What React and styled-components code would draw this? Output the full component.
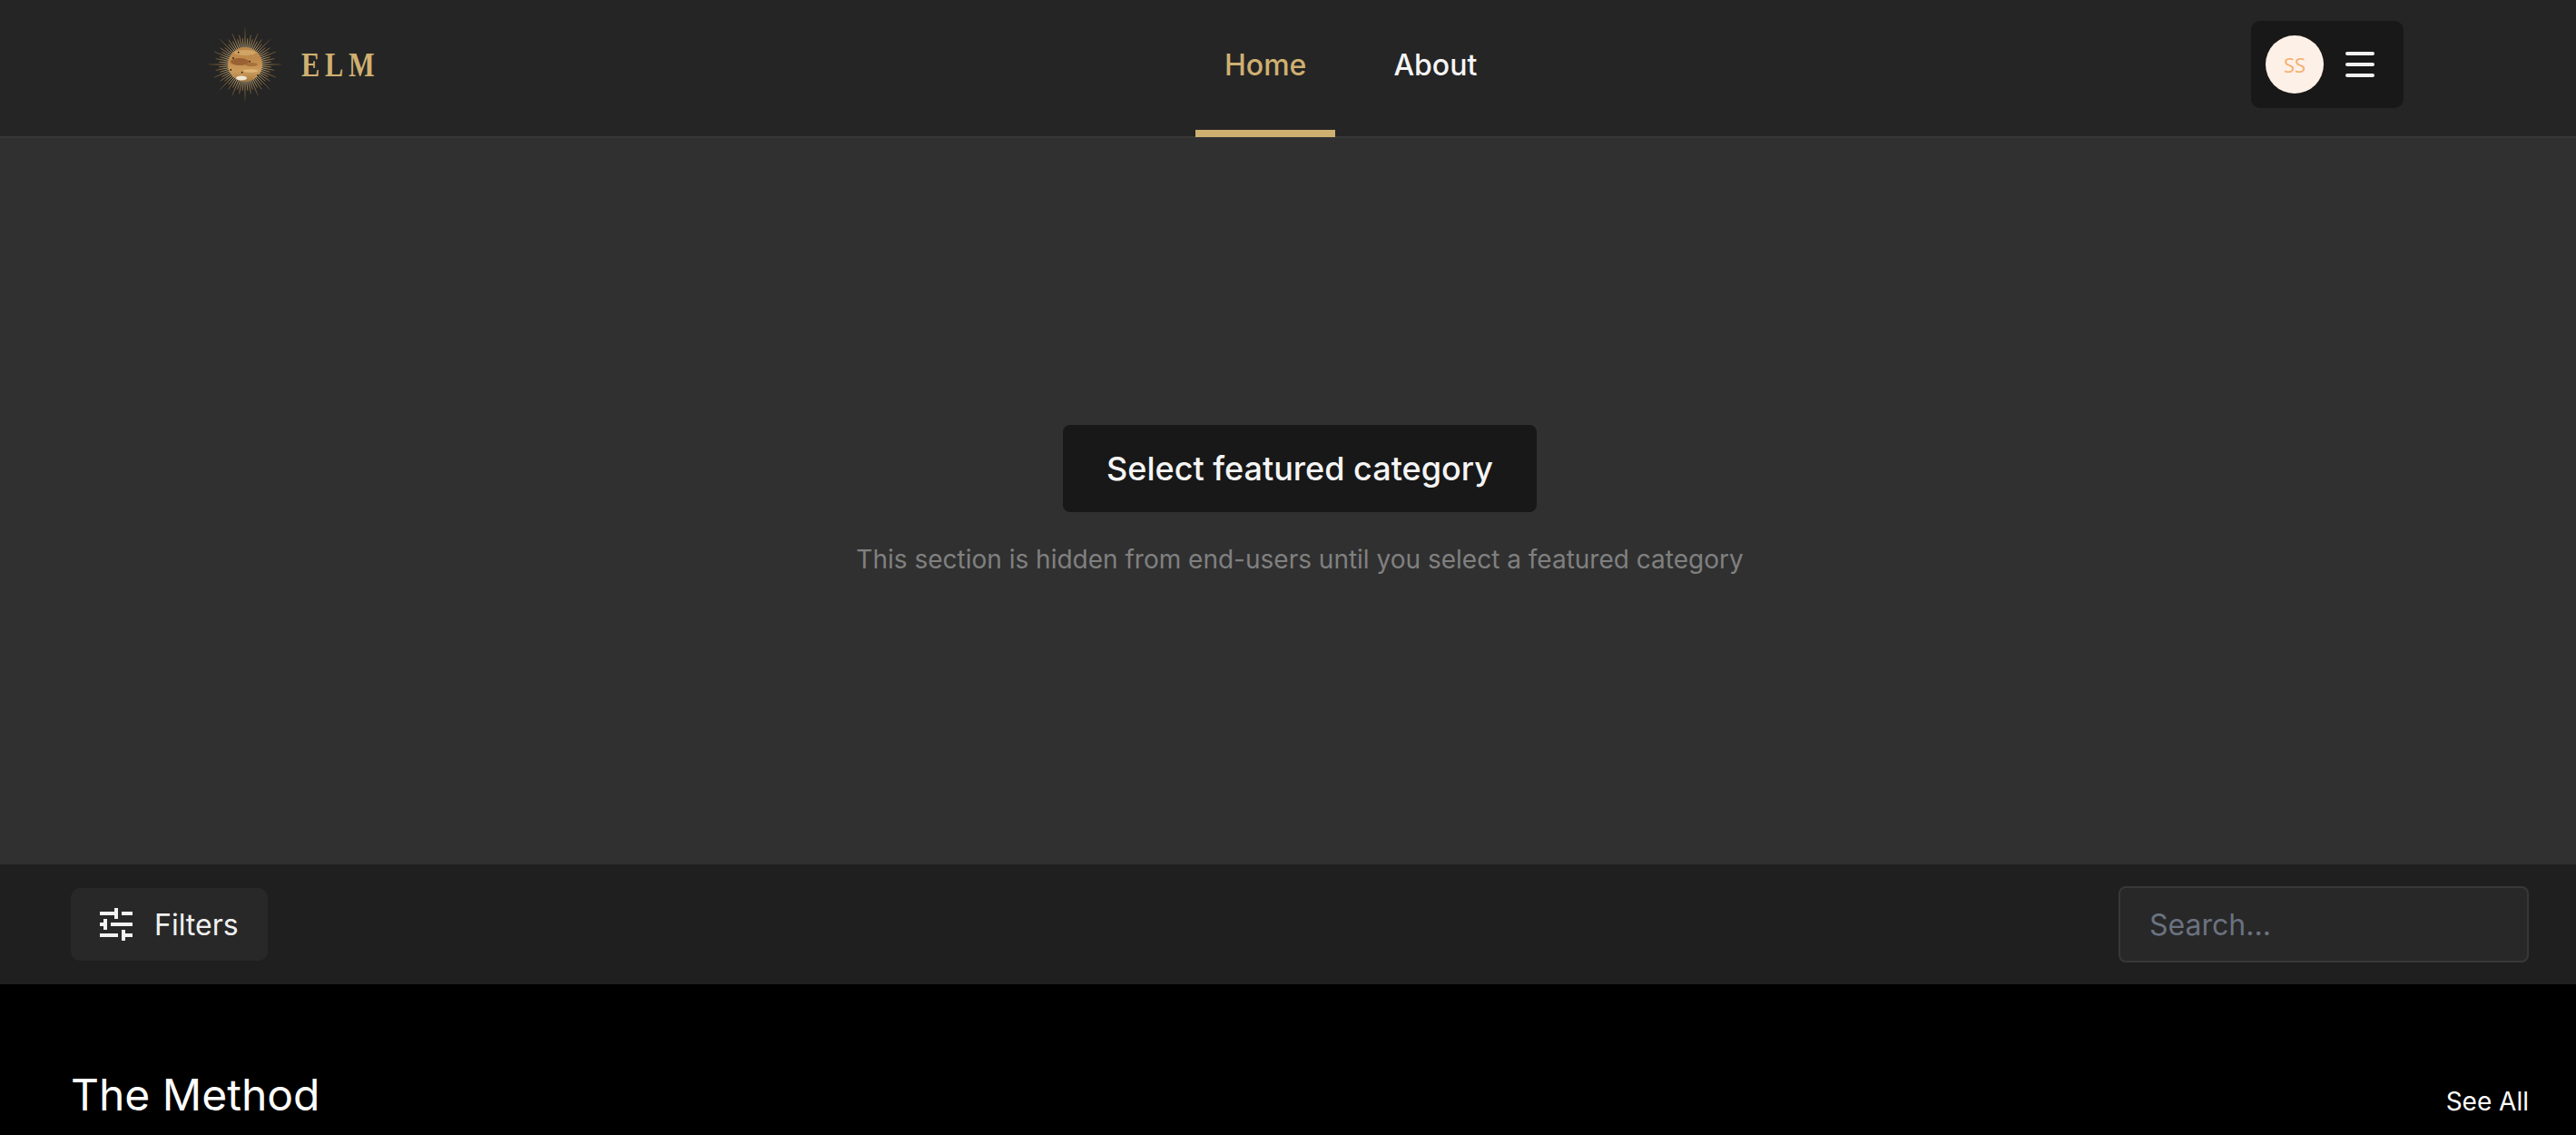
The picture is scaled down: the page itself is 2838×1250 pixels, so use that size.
import React from "react";
import styled, { createGlobalStyle } from "styled-components";

const GlobalStyle = createGlobalStyle`
  * {
    box-sizing: border-box;
  }

  html,
  body {
    margin: 0;
    height: 100%;
    overflow: hidden;
    background-color: #000;
  }

  body {
    font-family: Inter, "Liberation Sans", sans-serif;
    color: #fff;
  }
`;

const rays = Array.from({ length: 64 }, (_, i) => {
  const angle = (i / 64) * Math.PI * 2;
  const length = i % 8 === 0 ? 40 : i % 4 === 0 ? 37 : i % 2 === 0 ? 33 : 29;
  return {
    x1: 40 + Math.cos(angle) * 18,
    y1: 40 + Math.sin(angle) * 18,
    x2: 40 + Math.cos(angle) * length,
    y2: 40 + Math.sin(angle) * length,
  };
});

const spots = [
  [32.7, 26.7],
  [45, 36.7],
  [24.3, 46],
  [36.7, 48.7],
  [54, 52],
  [27, 33],
];

const SunLogo = () => (
  <svg width="80" height="80" viewBox="0 0 80 80">
    <defs>
      <radialGradient id="rayFade" gradientUnits="userSpaceOnUse" cx="40" cy="40" r="40">
        <stop offset="0.45" stopColor="#e6cd98" />
        <stop offset="0.7" stopColor="#a07a44" />
        <stop offset="1" stopColor="#4a3820" />
      </radialGradient>
      <linearGradient id="planet" x1="0" y1="0" x2="0" y2="1">
        <stop offset="0" stopColor="#b9874a" />
        <stop offset="0.35" stopColor="#c08a4c" />
        <stop offset="0.7" stopColor="#cb9c5c" />
        <stop offset="1" stopColor="#a87a42" />
      </linearGradient>
    </defs>
    {rays.map((ray, i) => (
      <line key={i} {...ray} stroke="url(#rayFade)" strokeWidth="0.8" />
    ))}
    <circle cx="40" cy="40" r="19" fill="url(#planet)" />
    <ellipse cx="40" cy="27" rx="12" ry="3" fill="#d8b071" opacity="0.7" />
    <ellipse cx="34" cy="37" rx="10" ry="4" fill="#8c5228" opacity="0.75" />
    <ellipse cx="47" cy="40" rx="7" ry="2" fill="#99632f" opacity="0.7" />
    <ellipse cx="46" cy="47" rx="8" ry="1.8" fill="#e3bd7c" opacity="0.8" />
    <ellipse cx="36" cy="55" rx="6" ry="2.6" fill="#efe6d0" />
    {spots.map(([cx, cy]) => (
      <circle key={`${cx}-${cy}`} cx={cx} cy={cy} r="0.9" fill="#2a1c12" />
    ))}
  </svg>
);

const TuneIcon = () => (
  <svg width="36" height="36" viewBox="0 0 36 36" stroke="#f2f2f2" strokeWidth="4" fill="none">
    <path d="M0 6h20M18 0v12M24 6h12" />
    <path d="M0 18h8M6 12v12M12 18h24" />
    <path d="M0 30h20M26 24v12M24 30h12" />
  </svg>
);

const Header = styled.header`
  display: flex;
  align-items: center;
  height: 150px;
  padding: 0 190px 8px 230px;
  background-color: #252525;
`;

const Brand = styled.div`
  display: flex;
  align-items: center;
  gap: 22px;
  width: 1087px;
`;

const BrandName = styled.span`
  font-family: "Liberation Serif", serif;
  font-weight: 700;
  font-size: 37px;
  line-height: 1;
  letter-spacing: 7px;
  color: #cfb071;
  transform: scaleX(0.82);
  transform-origin: left center;
`;

const Nav = styled.nav`
  display: flex;
  align-self: stretch;
  gap: 32px;
  margin-bottom: -9px;
`;

const NavLink = styled.a`
  display: flex;
  align-items: center;
  padding: 0 32px;
  font-size: 32px;
  font-weight: 500;
  color: ${(props) => (props.$active ? "#cfb071" : "#f5f5f5")};
  border-bottom: 8px solid ${(props) => (props.$active ? "#cfb071" : "transparent")};
`;

const UserBox = styled.div`
  display: flex;
  align-items: center;
  gap: 24px;
  height: 96px;
  margin-left: auto;
  padding: 0 32px 0 16px;
  background-color: #181818;
  border-radius: 10px;
`;

const Avatar = styled.div`
  display: flex;
  align-items: center;
  justify-content: center;
  width: 64px;
  height: 64px;
  border-radius: 50%;
  background-color: #fdf0e7;
  color: #f5ae70;
  font-size: 22px;
  font-family: "Open Sans", sans-serif;
`;

const Burger = styled.div`
  display: flex;
  flex-direction: column;
  gap: 8px;
  width: 32px;
`;

const BurgerLine = styled.span`
  height: 4px;
  border-radius: 2px;
  background-color: #f0f0f0;
`;

const Hero = styled.section`
  display: flex;
  flex-direction: column;
  align-items: center;
  height: 802px;
  padding: 316px 52px 0 78px;
  background-color: #303030;
  border-top: 2px solid #383838;
`;

const FeatureButton = styled.button`
  width: 522px;
  height: 96px;
  border: none;
  border-radius: 8px;
  background-color: #181818;
  color: #f5f5f5;
  font-family: inherit;
  font-size: 36px;
  font-weight: 500;
`;

const Hint = styled.p`
  margin: 35px 0 0;
  font-size: 28px;
  color: #808080;
`;

const FilterBar = styled.div`
  display: flex;
  align-items: center;
  justify-content: space-between;
  height: 132px;
  padding: 0 52px 0 78px;
  background-color: #1f1f1f;
`;

const FilterButton = styled.button`
  display: flex;
  align-items: center;
  gap: 24px;
  width: 217px;
  height: 80px;
  padding: 0 0 0 32px;
  border: none;
  border-radius: 10px;
  background-color: #282828;
  color: #f0f0f0;
  font-family: inherit;
  font-size: 32px;
`;

const SearchInput = styled.input`
  width: 452px;
  height: 84px;
  padding: 0 32px;
  border: 2px solid #383838;
  border-radius: 8px;
  background-color: #282828;
  color: #f0f0f0;
  font-family: inherit;
  font-size: 32px;
  outline: none;

  &::placeholder {
    color: #6b7280;
    opacity: 1;
  }
`;

const Section = styled.section`
  padding: 92px 52px 0 78px;
  background-color: #000;
`;

const SectionHeader = styled.div`
  display: flex;
  align-items: flex-end;
  justify-content: space-between;
`;

const SectionTitle = styled.h2`
  margin: 0;
  font-size: 48px;
  font-weight: 400;
`;

const SeeAll = styled.a`
  margin-bottom: 5px;
  font-size: 28px;
  color: #fff;
`;

const App = () => {
  return (
    <>
      <GlobalStyle />
      <Header>
        <Brand>
          <SunLogo />
          <BrandName>ELM</BrandName>
        </Brand>
        <Nav>
          <NavLink $active>Home</NavLink>
          <NavLink>About</NavLink>
        </Nav>
        <UserBox>
          <Avatar>SS</Avatar>
          <Burger>
            <BurgerLine />
            <BurgerLine />
            <BurgerLine />
          </Burger>
        </UserBox>
      </Header>
      <Hero>
        <FeatureButton>Select featured category</FeatureButton>
        <Hint>This section is hidden from end-users until you select a featured category</Hint>
      </Hero>
      <FilterBar>
        <FilterButton>
          <TuneIcon />
          Filters
        </FilterButton>
        <SearchInput placeholder="Search..." />
      </FilterBar>
      <Section>
        <SectionHeader>
          <SectionTitle>The Method</SectionTitle>
          <SeeAll>See All</SeeAll>
        </SectionHeader>
      </Section>
    </>
  );
};

export default App;
